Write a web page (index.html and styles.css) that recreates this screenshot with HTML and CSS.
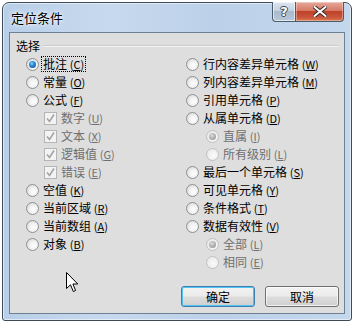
FILE: index.html
```html
<!DOCTYPE html>
<html lang="zh-CN">
<head>
<meta charset="utf-8">
<title>定位条件</title>
<link rel="stylesheet" href="styles.css">
</head>
<body>
<div class="window">
  <div class="titlebar">
    <span class="title">定位条件</span>
    <div class="caption-btns">
      <div class="cap help"><span>?</span></div>
      <div class="cap close"><svg width="14" height="11" viewBox="0 0 14 11"><path d="M1.5 1 L12.5 10 M12.5 1 L1.5 10" stroke="#3a2a2a" stroke-width="4" stroke-linecap="round"/><path d="M1.5 1 L12.5 10 M12.5 1 L1.5 10" stroke="#fff" stroke-width="2" stroke-linecap="round"/></svg></div>
    </div>
  </div>
  <div class="client">
    <div class="group">
      <div class="group-head"><span class="group-label">选择</span><span class="group-line"></span></div>
      <div class="cols">
        <div class="col">
          <div class="item"><span class="radio on"></span><span class="lbl focus">批注 <span class="acc">(<u>C</u>)</span></span></div>
          <div class="item"><span class="radio"></span><span class="lbl">常量 <span class="acc">(<u>O</u>)</span></span></div>
          <div class="item"><span class="radio"></span><span class="lbl">公式 <span class="acc">(<u>F</u>)</span></span></div>
          <div class="item sub dis"><span class="check"><svg width="11" height="11" viewBox="0 0 11 11"><path d="M2 5.5 L4.5 8.5 L9 1.5" fill="none" stroke="#a3a3a3" stroke-width="1.6"/></svg></span><span class="lbl">数字 <span class="acc">(<u>U</u>)</span></span></div>
          <div class="item sub dis"><span class="check"><svg width="11" height="11" viewBox="0 0 11 11"><path d="M2 5.5 L4.5 8.5 L9 1.5" fill="none" stroke="#a3a3a3" stroke-width="1.6"/></svg></span><span class="lbl">文本 <span class="acc">(<u>X</u>)</span></span></div>
          <div class="item sub dis"><span class="check"><svg width="11" height="11" viewBox="0 0 11 11"><path d="M2 5.5 L4.5 8.5 L9 1.5" fill="none" stroke="#a3a3a3" stroke-width="1.6"/></svg></span><span class="lbl">逻辑值 <span class="acc">(<u>G</u>)</span></span></div>
          <div class="item sub dis"><span class="check"><svg width="11" height="11" viewBox="0 0 11 11"><path d="M2 5.5 L4.5 8.5 L9 1.5" fill="none" stroke="#a3a3a3" stroke-width="1.6"/></svg></span><span class="lbl">错误 <span class="acc">(<u>E</u>)</span></span></div>
          <div class="item"><span class="radio"></span><span class="lbl">空值 <span class="acc">(<u>K</u>)</span></span></div>
          <div class="item"><span class="radio"></span><span class="lbl">当前区域 <span class="acc">(<u>R</u>)</span></span></div>
          <div class="item"><span class="radio"></span><span class="lbl">当前数组 <span class="acc">(<u>A</u>)</span></span></div>
          <div class="item"><span class="radio"></span><span class="lbl">对象 <span class="acc">(<u>B</u>)</span></span></div>
        </div>
        <div class="col">
          <div class="item"><span class="radio"></span><span class="lbl">行内容差异单元格 <span class="acc">(<u>W</u>)</span></span></div>
          <div class="item"><span class="radio"></span><span class="lbl">列内容差异单元格 <span class="acc">(<u>M</u>)</span></span></div>
          <div class="item"><span class="radio"></span><span class="lbl">引用单元格 <span class="acc">(<u>P</u>)</span></span></div>
          <div class="item"><span class="radio"></span><span class="lbl">从属单元格 <span class="acc">(<u>D</u>)</span></span></div>
          <div class="item sub dis"><span class="radio on"></span><span class="lbl">直属 <span class="acc">(<u>I</u>)</span></span></div>
          <div class="item sub dis"><span class="radio"></span><span class="lbl">所有级别 <span class="acc">(<u>L</u>)</span></span></div>
          <div class="item"><span class="radio"></span><span class="lbl">最后一个单元格 <span class="acc">(<u>S</u>)</span></span></div>
          <div class="item"><span class="radio"></span><span class="lbl">可见单元格 <span class="acc">(<u>Y</u>)</span></span></div>
          <div class="item"><span class="radio"></span><span class="lbl">条件格式 <span class="acc">(<u>T</u>)</span></span></div>
          <div class="item"><span class="radio"></span><span class="lbl">数据有效性 <span class="acc">(<u>V</u>)</span></span></div>
          <div class="item sub dis"><span class="radio on"></span><span class="lbl">全部 <span class="acc">(<u>L</u>)</span></span></div>
          <div class="item sub dis"><span class="radio"></span><span class="lbl">相同 <span class="acc">(<u>E</u>)</span></span></div>
        </div>
      </div>
    </div>
    <div class="buttons">
      <div class="btn default">确定</div>
      <div class="btn">取消</div>
    </div>
    <svg class="cursor" width="13" height="21" viewBox="0 0 13 21"><path d="M0.5 0.5 L0.5 16.5 L4.5 12.8 L7.3 19.5 L9.6 18.5 L6.9 12 L11.8 12 Z" fill="#fff" stroke="#000" stroke-width="1"/></svg>
  </div>
</div>
</body>
</html>
```
FILE: styles.css
```css
html, body {
  margin: 0;
  padding: 0;
  background: #ffffff;
}
body {
  font-family: "Noto Sans CJK SC", "Noto Sans", sans-serif;
  font-size: 12px;
  color: #000;
}
.window {
  box-sizing: border-box;
  margin: 2px 0 0 2px;
  width: 350px;
  height: 319px;
  border: 1px solid #3f4b57;
  border-radius: 7px 7px 3px 3px;
  background: linear-gradient(90deg, #b8cfe8 0%, #c7d9ee 30%, #bcd1e9 60%, #c3d7ed 100%);
  display: flex;
  flex-direction: column;
  box-shadow: inset 0 0 0 1px rgba(255,255,255,0.55);
}
.titlebar {
  height: 29px;
  display: flex;
  align-items: flex-start;
  padding-left: 8px;
}
.title {
  margin-top: 7px;
  font-size: 13px;
  line-height: 16px;
  text-shadow: 0 0 6px #fff, 0 0 3px #fff;
}
.caption-btns {
  margin-left: auto;
  margin-right: 7px;
  margin-top: -1px;
  display: flex;
}
.cap {
  box-sizing: border-box;
  height: 20px;
  border: 1px solid #4d5c6c;
  border-top: none;
  display: flex;
  align-items: center;
  justify-content: center;
}
.help {
  width: 23px;
  border-radius: 0 0 0 4px;
  border-right: none;
  background: linear-gradient(180deg, #dbe5ef 0%, #c5d3e1 45%, #a9bacd 50%, #b8c8d9 100%);
  box-shadow: inset 0 0 0 1px rgba(255,255,255,0.6);
}
.help span {
  font-family: "DejaVu Sans", sans-serif;
  font-weight: bold;
  font-size: 13px;
  color: #fff;
  line-height: 1;
  text-shadow: 1px 0 0 #3a4656, -1px 0 0 #3a4656, 0 1px 0 #3a4656, 0 -1px 0 #3a4656;
}
.close {
  width: 49px;
  border-radius: 0 0 4px 0;
  background: linear-gradient(180deg, #e6a99c 0%, #d77a66 45%, #c0412a 50%, #c9553a 80%, #d97a52 100%);
  box-shadow: inset 0 0 0 1px rgba(255,255,255,0.35);
}
.client {
  position: relative;
  box-sizing: border-box;
  margin: 0 6px 6px 6px;
  height: 282px;
  border: 1px solid #6d7f92;
  background: #dedede;
  display: flex;
  flex-direction: column;
}
.group {
  padding: 6px 0 0 6px;
}
.group-head {
  display: flex;
  align-items: center;
  height: 13px;
}
.group-label {
  line-height: 13px;
}
.group-line {
  flex: 1;
  height: 1px;
  margin: 1px 6px 0 3px;
  background: #c8cdd2;
  border-bottom: 1px solid #f4f4f4;
}
.cols {
  margin-top: 3px;
  display: grid;
  grid-template-columns: 160px 1fr;
  padding-left: 10px;
}
.item {
  height: 18px;
  display: flex;
  align-items: center;
  white-space: nowrap;
}
.item.sub {
  padding-left: 18px;
}
.col + .col .item.sub {
  padding-left: 20px;
}
.radio {
  box-sizing: border-box;
  width: 13px;
  height: 13px;
  border-radius: 50%;
  border: 1px solid #8f9092;
  background: radial-gradient(circle at 60% 60%, #ffffff 0%, #f2f2f2 40%, #cfd0d1 100%);
  margin-right: 4px;
  flex: none;
  position: relative;
}
.radio.on::after {
  content: "";
  position: absolute;
  left: 2px;
  top: 2px;
  width: 7px;
  height: 7px;
  border-radius: 50%;
  background: radial-gradient(circle at 40% 35%, #7fd0ff 0%, #2a8ad4 40%, #0c3f7a 100%);
}
.dis .radio {
  border-color: #c0c1c2;
  background: radial-gradient(circle at 60% 60%, #fafafa 0%, #f0f0f0 50%, #e2e2e2 100%);
}
.dis .radio.on::after {
  background: radial-gradient(circle at 40% 35%, #dcdcdc 0%, #a9a9a9 60%, #8d8d8d 100%);
}
.check {
  box-sizing: border-box;
  width: 13px;
  height: 13px;
  border: 1px solid #b5b5b5;
  background: #f3f3f3;
  margin-right: 4px;
  display: flex;
  align-items: center;
  justify-content: center;
  flex: none;
}
.check svg {
  display: block;
}
.lbl {
  line-height: 14px;
  padding: 0 1px;
  border: 1px dotted transparent;
  margin-left: -2px;
}
.lbl.focus {
  border-color: #000;
}
.dis .lbl {
  color: #6f6f6f;
}
.acc {
  font-size: 11px;
}
.buttons {
  margin-top: auto;
  display: flex;
  justify-content: flex-end;
  gap: 10px;
  padding: 0 5px 6px 0;
}
.btn {
  box-sizing: border-box;
  width: 74px;
  height: 21px;
  border: 1px solid #707070;
  border-radius: 3px;
  background: linear-gradient(180deg, #f2f2f2 0%, #ebebeb 48%, #dddddd 52%, #cfcfcf 100%);
  box-shadow: inset 0 0 0 1px rgba(255,255,255,0.7);
  display: flex;
  align-items: center;
  justify-content: center;
  line-height: 14px;
}
.btn.default {
  border-color: #3c7fb1;
  box-shadow: inset 0 0 0 1px #4fc3f4;
}
.cursor {
  position: absolute;
  left: 56px;
  top: 239px;
}
```
